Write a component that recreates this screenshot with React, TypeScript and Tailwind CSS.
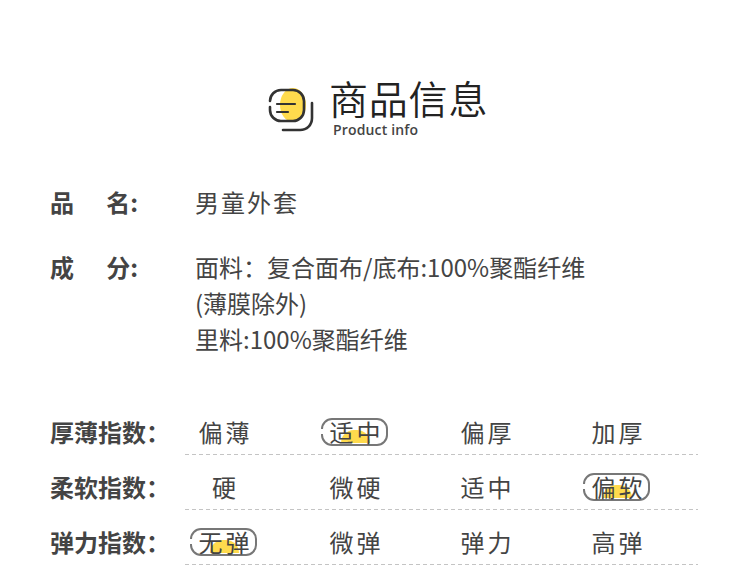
import type { ReactNode } from "react";

const cjk = "font-['Noto_Sans_CJK_SC',sans-serif]";

const scales = [
  { label: "厚薄指数：", options: ["偏薄", "适中", "偏厚", "加厚"], active: 1 },
  { label: "柔软指数：", options: ["硬", "微硬", "适中", "偏软"], active: 3 },
  { label: "弹力指数：", options: ["无弹", "微弹", "弹力", "高弹"], active: 0 },
];

function InfoIcon() {
  return (
    <svg width="48" height="46" viewBox="0 0 48 46" fill="none" className="shrink-0">
      <ellipse cx="27" cy="18" rx="13" ry="17" fill="#ffdb4d" />
      <path
        d="M4 14A11 11 0 0 1 15 3H27A11 11 0 0 1 38 14V23A11 11 0 0 1 27 34H15A11 11 0 0 1 4 23V20"
        stroke="#333"
        strokeWidth="2.6"
        strokeLinecap="round"
      />
      <path d="M11 17H29M11 25H22" stroke="#333" strokeWidth="2.2" strokeLinecap="round" />
      <path d="M46 16V31C46 38 41 43 34 43H17" stroke="#333" strokeWidth="2.6" strokeLinecap="round" />
    </svg>
  );
}

function Option({ text, active }: { text: string; active: boolean }) {
  return (
    <div className="relative flex justify-center">
      {active && (
        <>
          <span className="absolute left-1/2 top-[12px] ml-[-14px] h-[13px] w-[29px] rounded-t-[14px] bg-[#ffdb4d]" />
          <span className="absolute left-1/2 top-0 ml-[-34px] h-[28px] w-[67px] rounded-[11px] border-2 border-[#777]" />
          <span className="absolute left-1/2 top-[11px] ml-[-35px] h-[5px] w-[4px] bg-white" />
        </>
      )}
      <span className="relative pl-[3px] text-[24px] leading-[28px] tracking-[3px] text-[#444]">{text}</span>
    </div>
  );
}

function Row({ label, children }: { label: ReactNode; children: ReactNode }) {
  return (
    <div className="flex">
      <div className="w-[145px] shrink-0 font-semibold text-[#444]">{label}</div>
      <div className="text-[#444]">{children}</div>
    </div>
  );
}

export default function App() {
  return (
    <div className={`h-[570px] w-[750px] overflow-hidden bg-white ${cjk}`}>
      {/* Header */}
      <header className="flex items-start pl-[266px] pt-[74px]">
        <div className="mt-[13px]">
          <InfoIcon />
        </div>
        <div className="ml-[15px]">
          <h1 className="text-[39px] leading-[46px] font-[350] tracking-[0.8px] text-[#222]">商品信息</h1>
          <p className="ml-[4px] mt-[1px] font-['Open_Sans',sans-serif] text-[14px] leading-[18px] font-semibold tracking-[0.15px] text-[#444]">
            Product info
          </p>
        </div>
      </header>

      {/* Basic info */}
      <section className="space-y-[29px] pl-[50px] pt-[45px] text-[24px] leading-[36px]">
        <Row
          label={
            <span className="flex w-[88px] justify-between">
              <span>品</span>
              <span>名:</span>
            </span>
          }
        >
          <span className="tracking-[2px]">男童外套</span>
        </Row>
        <Row
          label={
            <span className="flex w-[88px] justify-between">
              <span>成</span>
              <span>分:</span>
            </span>
          }
        >
          <p>面料：复合面布/底布:100%聚酯纤维</p>
          <p>(薄膜除外)</p>
          <p>里料:100%聚酯纤维</p>
        </Row>
      </section>

      {/* Scales */}
      <section className="space-y-[18px] pl-[50px] pt-[61px]">
        {scales.map((s) => (
          <div key={s.label} className="flex items-start">
            <div className="w-[135px] shrink-0 text-[24px] leading-[28px] font-semibold text-[#444]">{s.label}</div>
            <div className="w-[513px]">
              <div className="grid grid-cols-[78px_78px_78px_78px] gap-x-[53px] pb-[8px]">
                {s.options.map((o, i) => (
                  <Option key={o} text={o} active={i === s.active} />
                ))}
              </div>
              <div className="h-px bg-[repeating-linear-gradient(to_right,#c4c4c4_0,#c4c4c4_4px,transparent_4px,transparent_7px)]" />
            </div>
          </div>
        ))}
      </section>
    </div>
  );
}
